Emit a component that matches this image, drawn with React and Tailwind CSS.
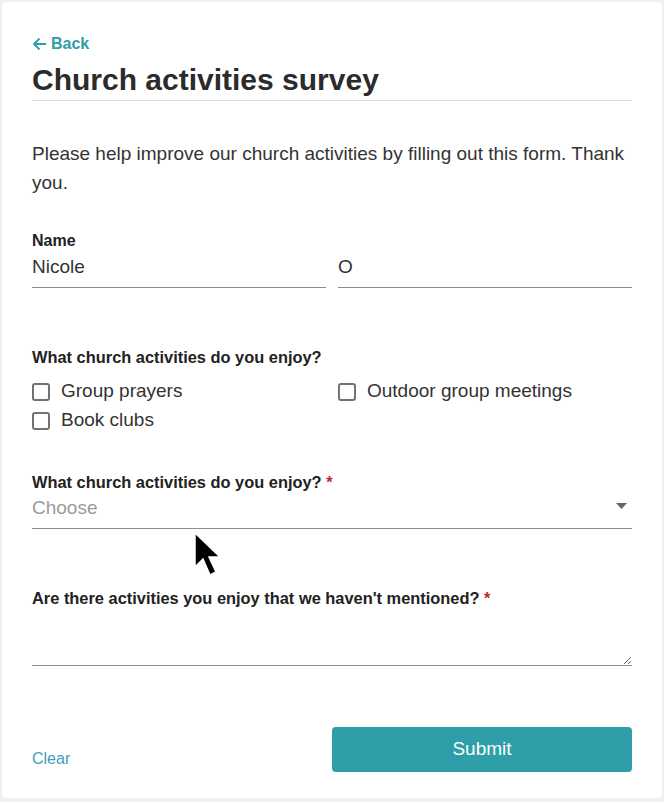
import { useState } from "react";

const font = { fontFamily: '"Liberation Sans", Arial, sans-serif' };

const activities = ["Group prayers", "Outdoor group meetings", "Book clubs"];

export default function App() {
  const [first, setFirst] = useState("Nicole");
  const [last, setLast] = useState("O");
  const [checked, setChecked] = useState({});
  const [choice, setChoice] = useState("");
  const [other, setOther] = useState("");

  return (
    <div className="min-h-screen bg-[#eff0f2] p-[2px]" style={font}>
      <div className="relative bg-white rounded-[4px] h-[796px] px-[30px] pt-[32px]">

        {/* Header */}
        <a href="#" className="flex items-center gap-[4px] h-[20px] text-[16px] font-bold text-[#2e9ea9]">
          <svg width="15" height="14" viewBox="0 0 15 14" fill="none" stroke="currentColor" strokeWidth="1.8">
            <path d="M14 7H2M7.5 1.5L2 7l5.5 5.5" />
          </svg>
          Back
        </a>
        <h1 className="mt-[9px] text-[30px] leading-[34px] font-bold text-[#2b2b2b] pb-[3px] border-b border-[#d9dadf]">
          Church activities survey
        </h1>

        <p className="mt-[38px] text-[19px] leading-[29px] text-[#333]">
          Please help improve our church activities by filling out this form. Thank you.
        </p>

        {/* Name */}
        <div className="mt-[35px]">
          <label className="block text-[16px] leading-[18px] font-bold text-[#222]">Name</label>
          <div className="grid grid-cols-2 gap-x-3">
            <input
              value={first}
              onChange={(e) => setFirst(e.target.value)}
              className="w-full pt-[4px] pb-[7px] text-[19px] leading-[26px] text-[#333] border-b border-[#8c8c8c] outline-none"
            />
            <input
              value={last}
              onChange={(e) => setLast(e.target.value)}
              className="w-full pt-[4px] pb-[7px] text-[19px] leading-[26px] text-[#333] border-b border-[#8c8c8c] outline-none"
            />
          </div>
        </div>

        {/* Checkboxes */}
        <div className="mt-[59px]">
          <p className="text-[16.4px] leading-[20px] font-bold text-[#222]">What church activities do you enjoy?</p>
          <div className="mt-[10px] grid grid-cols-2 gap-x-3">
            {activities.map((a) => (
              <label key={a} className="flex items-center gap-[11px] h-[29px] text-[19px] text-[#333] cursor-pointer">
                <span
                  onClick={() => setChecked({ ...checked, [a]: !checked[a] })}
                  className={`w-[18px] h-[18px] rounded-[3px] border-2 border-[#727272] ${checked[a] ? "bg-[#2e9ea9]" : "bg-white"}`}
                />
                {a}
              </label>
            ))}
          </div>
        </div>

        {/* Select */}
        <div className="mt-[37px]">
          <p className="text-[16.4px] leading-[20px] font-bold text-[#222]">
            What church activities do you enjoy? <span className="text-[#c0282d]">*</span>
          </p>
          <div className="relative">
            <select
              value={choice}
              onChange={(e) => setChoice(e.target.value)}
              className="w-full appearance-none bg-white pt-[3px] pb-[7px] text-[19px] leading-[26px] text-[#9a9a9a] border-b border-[#8c8c8c] outline-none"
            >
              <option value="">Choose</option>
              {activities.map((a) => <option key={a}>{a}</option>)}
            </select>
            <svg className="absolute right-[5px] top-[11px] pointer-events-none" width="11" height="6" viewBox="0 0 11 6">
              <path d="M0 0h11L5.5 6z" fill="#666" />
            </svg>
          </div>
        </div>

        {/* Textarea */}
        <div className="mt-[59px]">
          <p className="text-[16.4px] leading-[20px] font-bold text-[#222]">
            Are there activities you enjoy that we haven't mentioned? <span className="text-[#c0282d]">*</span>
          </p>
          <textarea
            value={other}
            onChange={(e) => setOther(e.target.value)}
            className="block w-full h-[58px] text-[19px] text-[#333] border-b border-[#8c8c8c] outline-none"
          />
        </div>

        {/* Actions */}
        <div className="mt-[61px] flex justify-between items-end">
          <button className="mb-[3px] text-[16px] leading-[20px] text-[#3d9fbd]">Clear</button>
          <button className="w-[300px] h-[45px] rounded-[4px] bg-[#2e9ea9] text-white text-[19px]">Submit</button>
        </div>

        {/* Mouse pointer from the capture */}
        <svg className="absolute left-[191px] top-[529px]" width="28" height="46" viewBox="0 0 28 46">
          <path d="M2 2v34l8-8 7 16 6-3-7-15h11z" fill="#000" stroke="#fff" strokeWidth="1.5" />
        </svg>
      </div>
    </div>
  );
}
